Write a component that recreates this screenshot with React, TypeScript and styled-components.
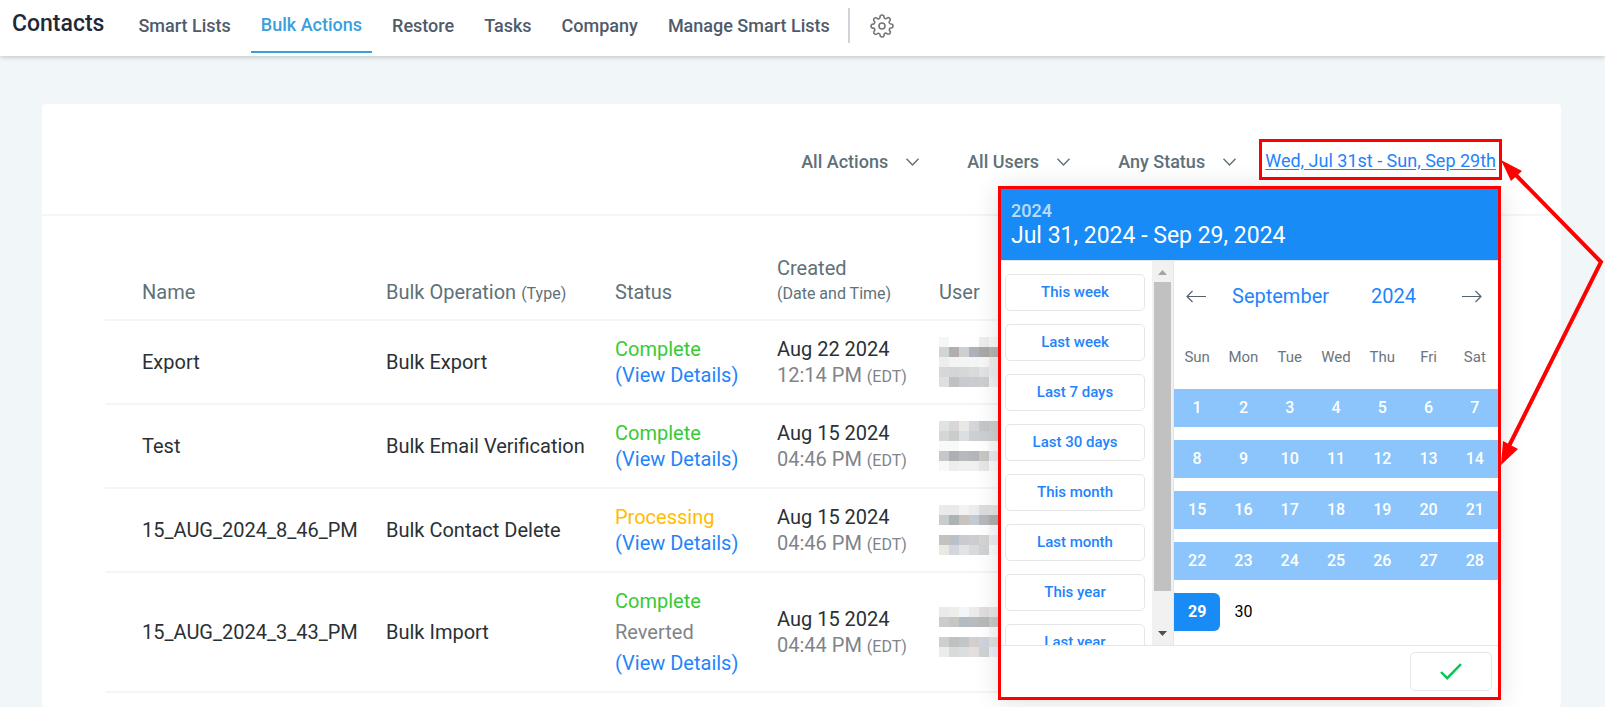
import React from "react";
import styled, { createGlobalStyle, css } from "styled-components";
import { FiSettings } from "react-icons/fi";

const GlobalStyle = createGlobalStyle`
  *, *::before, *::after { box-sizing: border-box; }
  html { background: #f1f6f9; }
  body {
    margin: 0;
    font-family: Roboto, "Liberation Sans", sans-serif;
    color: #2a3135;
  }
  button, select { font: inherit; color: inherit; }
`;

const BLUE = "#188bf6";
const LINK = "#1f84fb";
const LINE = "#f1f6f9";
const MARK = "#ff0000";

/* ---------- top bar ---------- */

const TopBar = styled.header`
  display: flex;
  align-items: flex-start;
  height: 56px;
  padding-left: 12px;
  background: #fff;
  box-shadow: 0 1px 5px rgba(0, 0, 0, 0.22);
`;

const Title = styled.h1`
  margin: 0 24px 0 0;
  font-size: 23px;
  font-weight: 500;
  line-height: 48px;
  color: #1f2937;
`;

const Nav = styled.nav`
  display: flex;
  gap: 10px;
`;

const NavLink = styled.a<{ $active?: boolean }>`
  display: flex;
  align-items: center;
  height: 53px;
  padding: 0 10px 2px;
  font-size: 18px;
  font-weight: 500;
  white-space: nowrap;
  text-decoration: none;
  color: ${(p) => (p.$active ? "#3aa0dc" : "#4f5b6b")};
  ${(p) => p.$active && css`border-bottom: 2px solid #3aa0dc;`}
`;

const Divider = styled.span`
  width: 2px;
  height: 35px;
  margin: 8px 20px 0 8px;
  background: #d2d3da;
`;

const IconButton = styled.button`
  display: flex;
  padding: 0;
  border: 0;
  background: none;
  cursor: pointer;
`;

const GearButton = styled(IconButton)`
  margin-top: 14px;
  color: #757575;

  svg { stroke-width: 1.6; }
`;

/* ---------- card and filters ---------- */

const Card = styled.main`
  margin: 48px 44px 0 42px;
  min-height: calc(100vh - 104px);
  border-radius: 4px;
  background: #fff;
`;

const Filters = styled.div`
  display: flex;
  justify-content: flex-end;
  align-items: center;
  height: 112px;
  padding-right: 59px;
  border-bottom: 2px solid ${LINE};
`;

const Filter = styled.label`
  display: flex;
  align-items: center;
  gap: 18px;
  margin-right: 48px;
  padding-top: 6px;
  color: #607179;

  &:last-of-type { margin-right: 23px; }
`;

const FilterSelect = styled.select`
  appearance: none;
  padding: 0;
  border: 0;
  background: none;
  font-size: 18px;
  font-weight: 500;
  line-height: 24px;
  cursor: pointer;
`;

const DateAnchor = styled.div`
  position: relative;
  height: 41px;
  padding: 5px 3px 0;
  border: 3px solid ${MARK};
`;

const DateLink = styled.a`
  font-size: 18px;
  line-height: 28px;
  white-space: nowrap;
  color: ${LINK};
  text-underline-offset: 2px;
`;

const Pointers = styled.svg`
  position: absolute;
  top: -3px;
  left: calc(100% + 2px);
  z-index: 3;
  pointer-events: none;
`;

/* ---------- table ---------- */

const TableWrap = styled.div`
  padding: 40px 63px 0;
`;

const Table = styled.table`
  width: 100%;
  table-layout: fixed;
  border-collapse: separate;
  border-spacing: 0;
  font-size: 20px;
  line-height: 26px;
`;

const Col = styled.col<{ $width?: number }>`
  width: ${(p) => (p.$width ? `${p.$width}px` : "auto")};
`;

const Th = styled.th`
  padding: 0 0 15px;
  border-bottom: 2px solid ${LINE};
  font-weight: 400;
  line-height: 24px;
  text-align: left;
  vertical-align: bottom;
  white-space: nowrap;
  color: #607179;

  &:first-child { padding-left: 37px; }
`;

const Td = styled.td`
  padding: 15px 0;
  border-bottom: 2px solid ${LINE};
  white-space: nowrap;

  &:first-child { padding-left: 37px; }
`;

const Small = styled.small`
  font-size: 16px;
  line-height: 1;
`;

const Stack = styled.div<{ $gap?: number }>`
  display: flex;
  flex-direction: column;
  align-items: flex-start;
  gap: ${(p) => p.$gap ?? 0}px;
`;

const tones = { green: "#37ca37", amber: "#ffbc00", grey: "#808488" };

const Tone = styled.span<{ $tone: keyof typeof tones }>`
  color: ${(p) => tones[p.$tone]};
`;

const DetailLink = styled.a`
  color: ${LINK};
  text-decoration: none;
`;

const Mosaic = styled.svg`
  display: block;
`;

/* ---------- date picker ---------- */

const Picker = styled.section`
  position: absolute;
  top: 44px;
  right: -2px;
  z-index: 2;
  width: 503px;
  border: 3px solid ${MARK};
  background: #fff;
  box-shadow: 0 2px 24px rgba(0, 0, 0, 0.12);
`;

const PickerHead = styled.div`
  padding: 11px 10px 10px;
  border-bottom: 1px solid #e6e6e6;
  background: ${BLUE};
  background-clip: padding-box;
  color: #fff;
`;

const PickerYear = styled.div`
  font-size: 18px;
  font-weight: 500;
  line-height: 22px;
  opacity: 0.7;
`;

const PickerRange = styled.div`
  font-size: 23px;
  line-height: 28px;
`;

const PickerBody = styled.div`
  display: flex;
  height: 384px;
`;

const Presets = styled.div`
  flex: 1;
  display: flex;
  flex-direction: column;
  gap: 13px;
  padding: 13px 7px 0 4px;
  overflow: hidden;
`;

const Preset = styled.button`
  flex: none;
  height: 37px;
  padding: 0;
  border: 1px solid #e6e6e6;
  border-radius: 5px;
  background: #fff;
  font-size: 15px;
  font-weight: 500;
  color: ${LINK};
  cursor: pointer;
`;

const ScrollTrack = styled.div`
  display: flex;
  flex-direction: column;
  align-items: center;
  width: 22px;
  padding: 9px 0;
  border-right: 1px solid #e6e6e6;
  background: #f1f1f1;
`;

const ScrollThumb = styled.div`
  width: 17px;
  height: 309px;
  margin: 7px 0 auto;
  background: #c1c1c1;
`;

const Calendar = styled.div`
  width: 324px;
`;

const MonthRow = styled.div`
  display: flex;
  align-items: center;
  height: 71px;
  padding: 0 16px 0 12px;
`;

const MonthButton = styled.button`
  padding: 0;
  border: 0;
  background: none;
  font-size: 20px;
  color: ${LINK};
  cursor: pointer;
`;

const MonthLabels = styled.div`
  flex: 1;
  display: flex;
  gap: 42px;
  padding-left: 26px;
`;

const Days = styled.table`
  width: 100%;
  table-layout: fixed;
  border-collapse: separate;
  border-spacing: 0 13px;
`;

const Weekday = styled.th`
  height: 31px;
  padding: 0 0 6px;
  font-size: 15px;
  font-weight: 400;
  color: #6c757d;
`;

const DayCell = styled.td`
  padding: 0;
`;

const Day = styled.button<{ $state: "range" | "end" | "plain" }>`
  display: block;
  width: 100%;
  height: 38px;
  padding: 0;
  border: 0;
  font-size: 16px;
  cursor: pointer;
  ${(p) =>
    p.$state === "range"
      ? css`background: #8cc5fb; color: #fff; font-weight: 500;`
      : p.$state === "end"
      ? css`background: ${BLUE}; color: #fff; font-weight: 700; border-radius: 0 6px 6px 0;`
      : css`background: none; color: #000;`}
`;

const PickerFoot = styled.div`
  display: flex;
  justify-content: flex-end;
  padding: 6px;
  border-top: 1px solid #e6e6e6;
`;

const ApplyButton = styled.button`
  display: flex;
  align-items: center;
  justify-content: center;
  width: 82px;
  height: 39px;
  padding: 0;
  border: 1px solid #e6e6e6;
  border-radius: 5px;
  background: #fff;
  cursor: pointer;
`;

/* ---------- drawings ---------- */

const Chevron = () => (
  <svg width="13" height="8" viewBox="0 0 13 8" fill="none" stroke="#607179" strokeWidth="1.4" aria-hidden>
    <path d="M0.5 0.8 6.5 7 12.5 0.8" />
  </svg>
);

const Arrow = ({ right }: { right?: boolean }) => (
  <svg width="20" height="13" viewBox="0 0 20 13" fill="none" stroke="#556270" strokeWidth="1.2" aria-hidden>
    <path d={right ? "M0 6.5H19M13.5 1 19 6.5 13.5 12" : "M20 6.5H1M6.5 1 1 6.5 6.5 12"} />
  </svg>
);

const Triangle = ({ down }: { down?: boolean }) => (
  <svg width="9" height="5" viewBox="0 0 9 5" aria-hidden>
    <path d={down ? "M0 0H9L4.5 5Z" : "M0 5H9L4.5 0Z"} fill={down ? "#505050" : "#a3a3a3"} />
  </svg>
);

const mosaics: string[][] = [
  [
    "f5f6f6 ffffff ffffff ffffff eeeeee f7f7f7",
    "d2d5d5 b1aeab cdcfd0 adb1ba aaa8a9 b4b4b0",
    "ededed f3f4f3 f3f5f5 f4f5f5 f7f7f7 ededee",
    "d5d7d8 d3d6d6 d6d7d8 d9dadc e2e3e6 ececee",
    "dedfdf bfc1c0 c8cacd c9ccd0 d0cfcf edf1f4",
  ],
  [
    "dfe3e4 d8d6d6 e8e8e6 d3d7da c6c7c8 cccccc",
    "d5d6d7 cbcdcc dcdee0 ccd0d4 ccd0d4 cfcfcf",
    "f9f9f9 f8f9f9 ffffff ffffff ffffff fafafa",
    "c5c8c8 acb0b2 b7b9bc b4b6ba c9c7c6 e6e8ec",
    "f8f8f8 ededec f0f0f0 eff0f0 e6e7e7 fafafa",
  ],
  [
    "e9eaea e8e9ec f3f2f1 ebecef dddddf e2e2e2",
    "c8cccc adb2b3 c8c1bc c3cbd2 b6b8bc b0aeae",
    "ffffff ffffff ffffff ffffff ffffff fafafa",
    "c4c2bd bbc1cb c9cbce cccdd0 d5d4d5 e9edf2",
    "e9e9e4 d3d7dc e0e4e5 d9dadc d0d2d5 fafafa",
  ],
  [
    "eaeaea ededec f3f5f8 ebebec dfdfe0 e6e6e6",
    "cacdce c8c6c2 b2bcc2 b9bbbc b7babb c9c8c6",
    "ffffff ffffff ffffff ffffff ffffff fafafa",
    "cccecf bfc1c1 c2c6c6 d4cfcf cfd4de dfe1e1",
    "ebecec dadada dbdddf e4dede cfd3d6 eaeff5",
  ],
];

const UserMosaic = ({ rows }: { rows: string[] }) => (
  <Mosaic width="60" height="50" viewBox="0 0 60 50" shapeRendering="crispEdges" role="img" aria-label="Hidden user name">
    {rows.flatMap((row, y) =>
      row.split(" ").map((c, x) => (
        <rect key={`${x}-${y}`} x={x * 10} y={y * 10} width="10" height="10" fill={`#${c}`} />
      ))
    )}
  </Mosaic>
);

/* ---------- data ---------- */

const navItems = ["Smart Lists", "Bulk Actions", "Restore", "Tasks", "Company", "Manage Smart Lists"];
const filters = [
  { label: "Action", value: "All Actions" },
  { label: "User", value: "All Users" },
  { label: "Status", value: "Any Status" },
];
const presets = ["This week", "Last week", "Last 7 days", "Last 30 days", "This month", "Last month", "This year", "Last year"];
const weekdays = ["Sun", "Mon", "Tue", "Wed", "Thu", "Fri", "Sat"];
const weeks = [0, 1, 2, 3, 4].map((w) => weekdays.map((_, d) => w * 7 + d + 1).filter((n) => n <= 30));

type Row = { name: string; operation: string; status: string; tone: "green" | "amber"; reverted?: boolean; date: string; time: string };

const rows: Row[] = [
  { name: "Export", operation: "Bulk Export", status: "Complete", tone: "green", date: "Aug 22 2024", time: "12:14 PM" },
  { name: "Test", operation: "Bulk Email Verification", status: "Complete", tone: "green", date: "Aug 15 2024", time: "04:46 PM" },
  { name: "15_AUG_2024_8_46_PM", operation: "Bulk Contact Delete", status: "Processing", tone: "amber", date: "Aug 15 2024", time: "04:46 PM" },
  { name: "15_AUG_2024_3_43_PM", operation: "Bulk Import", status: "Complete", tone: "green", reverted: true, date: "Aug 15 2024", time: "04:44 PM" },
];

const DatePicker = () => (
  <Picker aria-label="Date range">
    <PickerHead>
      <PickerYear>2024</PickerYear>
      <PickerRange>Jul 31, 2024 - Sep 29, 2024</PickerRange>
    </PickerHead>
    <PickerBody>
      <Presets>
        {presets.map((p) => (
          <Preset key={p} type="button">{p}</Preset>
        ))}
      </Presets>
      <ScrollTrack>
        <Triangle />
        <ScrollThumb />
        <Triangle down />
      </ScrollTrack>
      <Calendar>
        <MonthRow>
          <IconButton type="button" aria-label="Previous month"><Arrow /></IconButton>
          <MonthLabels>
            <MonthButton type="button">September</MonthButton>
            <MonthButton type="button">2024</MonthButton>
          </MonthLabels>
          <IconButton type="button" aria-label="Next month"><Arrow right /></IconButton>
        </MonthRow>
        <Days>
          <thead>
            <tr>{weekdays.map((d) => <Weekday key={d} scope="col">{d}</Weekday>)}</tr>
          </thead>
          <tbody>
            {weeks.map((week) => (
              <tr key={week[0]}>
                {week.map((n) => (
                  <DayCell key={n}>
                    <Day type="button" $state={n < 29 ? "range" : n === 29 ? "end" : "plain"}>{n}</Day>
                  </DayCell>
                ))}
              </tr>
            ))}
          </tbody>
        </Days>
      </Calendar>
    </PickerBody>
    <PickerFoot>
      <ApplyButton type="button" aria-label="Apply">
        <svg width="22" height="17" viewBox="0 0 22 17" fill="none" stroke="#00c853" strokeWidth="2.4" aria-hidden>
          <path d="M1 9 7.2 15.2 21 1.2" />
        </svg>
      </ApplyButton>
    </PickerFoot>
  </Picker>
);

export default function App() {
  return (
    <>
      <GlobalStyle />
      <TopBar>
        <Title>Contacts</Title>
        <Nav>
          {navItems.map((item) => (
            <NavLink key={item} href="#" $active={item === "Bulk Actions"}>{item}</NavLink>
          ))}
        </Nav>
        <Divider />
        <GearButton type="button" aria-label="Settings">
          <FiSettings size={24} />
        </GearButton>
      </TopBar>
      <Card>
        <Filters>
          {filters.map((f) => (
            <Filter key={f.label}>
              <FilterSelect aria-label={f.label}>
                <option>{f.value}</option>
              </FilterSelect>
              <Chevron />
            </Filter>
          ))}
          <DateAnchor>
            <DateLink href="#">Wed, Jul 31st - Sun, Sep 29th</DateLink>
            <DatePicker />
            <Pointers width="103" height="330" viewBox="0 0 103 330" aria-hidden>
              <path d="M12 33 100 123 7 309" fill="none" stroke={MARK} strokeWidth="4" />
              <path d="M0 21 21 32 10 42Z" fill={MARK} />
              <path d="M0 326 2 302 17 310Z" fill={MARK} />
            </Pointers>
          </DateAnchor>
        </Filters>
        <TableWrap>
          <Table>
            <colgroup>
              <Col $width={281} />
              <Col $width={229} />
              <Col $width={162} />
              <Col $width={162} />
              <Col />
            </colgroup>
            <thead>
              <tr>
                <Th scope="col">Name</Th>
                <Th scope="col">Bulk Operation <Small>(Type)</Small></Th>
                <Th scope="col">Status</Th>
                <Th scope="col">Created<br /><Small>(Date and Time)</Small></Th>
                <Th scope="col">User</Th>
              </tr>
            </thead>
            <tbody>
              {rows.map((r, i) => (
                <tr key={r.name}>
                  <Td>{r.name}</Td>
                  <Td>{r.operation}</Td>
                  <Td>
                    <Stack $gap={r.reverted ? 5 : 0}>
                      <Tone $tone={r.tone}>{r.status}</Tone>
                      {r.reverted && <Tone $tone="grey">Reverted</Tone>}
                      <DetailLink href="#">(View Details)</DetailLink>
                    </Stack>
                  </Td>
                  <Td>
                    <Stack>
                      <span>{r.date}</span>
                      <Tone $tone="grey">{r.time} <Small>(EDT)</Small></Tone>
                    </Stack>
                  </Td>
                  <Td><UserMosaic rows={mosaics[i]} /></Td>
                </tr>
              ))}
            </tbody>
          </Table>
        </TableWrap>
      </Card>
    </>
  );
}
